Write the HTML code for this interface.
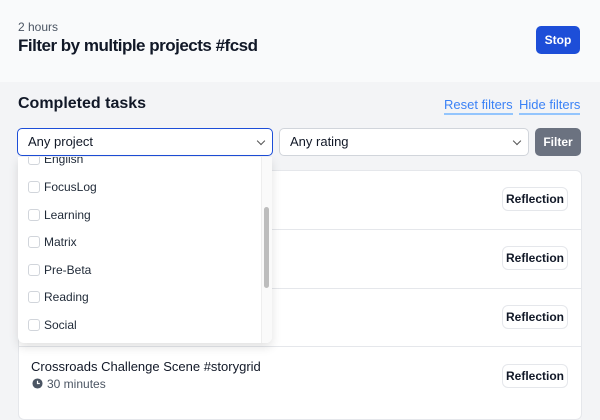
<!DOCTYPE html><html><head><style>
*{box-sizing:border-box;margin:0;padding:0}
body{width:600px;height:404px;overflow:hidden;background:#f3f4f6;font-family:"Liberation Sans",sans-serif;position:relative;color:#111827}
.a{position:absolute}
.hdr{left:0;top:0;width:600px;height:82px;background:#f9fafb}
.btn{border:1px solid #e5e7eb;border-radius:6px;background:#fff;font-size:12px;font-weight:bold;text-align:center;line-height:22px}
.sel{background:#fff;border:1px solid #d1d5db;border-radius:5px;height:28px;font-size:13px;line-height:26px;padding-left:10px}
.chev{position:absolute;right:8px;top:9px;width:6px;height:6px;border-right:1.3px solid #555;border-bottom:1.3px solid #555;transform:rotate(45deg)}
.it{position:absolute;left:10px;font-size:12px;color:#1f2937}
.it i{display:inline-block;width:12px;height:12px;border:1px solid #d1d5db;border-radius:3px;vertical-align:-2px;margin-right:4px;background:#fff}
</style></head><body>
<div class="a hdr"></div>
<div class="a" style="left:18px;top:20px;font-size:12px;color:#4b5563">2 hours</div>
<div class="a" style="left:18px;top:36px;font-size:17px;font-weight:bold;letter-spacing:-0.5px">Filter by multiple projects #fcsd</div>
<div class="a" style="left:536px;top:26px;width:44px;height:28px;background:#1d4ed8;border-radius:5px;color:#fff;font-size:12px;font-weight:bold;text-align:center;line-height:28px">Stop</div>
<div class="a" style="left:18px;top:95px;font-size:16px;font-weight:bold">Completed tasks</div>
<div class="a" style="left:444px;top:97px;font-size:13px;color:#3b82f6;border-bottom:2px solid #93c5fd;line-height:16px">Reset filters</div>
<div class="a" style="left:519px;top:97px;font-size:13px;color:#3b82f6;border-bottom:2px solid #93c5fd;line-height:16px">Hide filters</div>
<div class="a sel" style="left:17px;top:128px;width:256px;border:1.5px solid #1d4ed8">Any project<div class="chev"></div></div>
<div class="a sel" style="left:279px;top:128px;width:250px">Any rating<div class="chev"></div></div>
<div class="a" style="left:535px;top:128px;width:46px;height:28px;background:#6b7280;border-radius:5px;color:#fff;font-size:12px;font-weight:bold;text-align:center;line-height:28px">Filter</div>
<div class="a" style="left:18px;top:170px;width:564px;height:250px;background:#fff;border:1px solid #e5e7eb;border-radius:6px"></div>
<div class="a" style="left:18px;top:229px;width:564px;height:1px;background:#e5e7eb"></div>
<div class="a" style="left:18px;top:288px;width:564px;height:1px;background:#e5e7eb"></div>
<div class="a" style="left:18px;top:346px;width:564px;height:1px;background:#e5e7eb"></div>
<div class="a btn" style="left:502px;top:187px;width:66px;height:24px">Reflection</div>
<div class="a btn" style="left:502px;top:246px;width:66px;height:24px">Reflection</div>
<div class="a btn" style="left:502px;top:305px;width:66px;height:24px">Reflection</div>
<div class="a btn" style="left:502px;top:364px;width:66px;height:24px">Reflection</div>
<div class="a" style="left:31px;top:359px;font-size:13px">Crossroads Challenge Scene #storygrid</div>
<svg class="a" style="left:32px;top:378px" width="11" height="11" viewBox="0 0 12 12"><circle cx="6" cy="6" r="5.5" fill="#4b5563"/><path d="M6 3v3h2.5" stroke="#fff" stroke-width="1.3" fill="none"/></svg>
<div class="a" style="left:47px;top:377px;font-size:12px;color:#4b5563">30 minutes</div>
<div class="a" style="left:18px;top:157px;width:254px;height:186px;background:#fff;border-radius:0 0 6px 6px;box-shadow:0 4px 10px rgba(0,0,0,.12);overflow:hidden">
<div class="it" style="top:-5px"><i></i>English</div>
<div class="it" style="top:23px"><i></i>FocusLog</div>
<div class="it" style="top:51px"><i></i>Learning</div>
<div class="it" style="top:78px"><i></i>Matrix</div>
<div class="it" style="top:106px"><i></i>Pre-Beta</div>
<div class="it" style="top:133px"><i></i>Reading</div>
<div class="it" style="top:161px"><i></i>Social</div>
<div class="a" style="left:243px;top:0;width:11px;height:186px;background:#fafafa;border-left:1px solid #eee"></div>
<div class="a" style="left:246px;top:50px;width:5px;height:81px;background:#bdbdbd;border-radius:3px"></div>
</div>
</body></html>
